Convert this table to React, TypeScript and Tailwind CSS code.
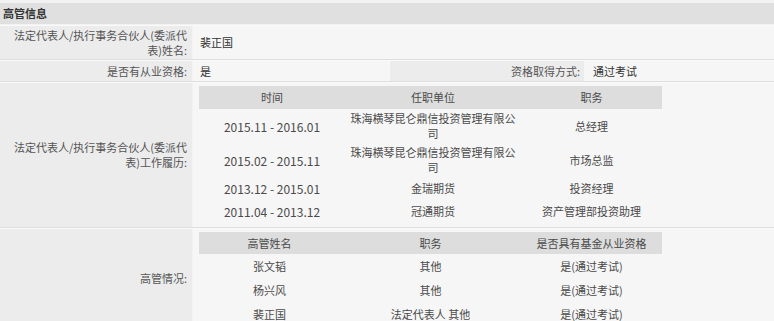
import React from 'react';

const career = [
  { time: '2015.11 - 2016.01', org: '珠海横琴昆仑鼎信投资管理有限公司', title: '总经理' },
  { time: '2015.02 - 2015.11', org: '珠海横琴昆仑鼎信投资管理有限公司', title: '市场总监' },
  { time: '2013.12 - 2015.01', org: '金瑞期货', title: '投资经理' },
  { time: '2011.04 - 2013.12', org: '冠通期货', title: '资产管理部投资助理' },
];

const managers = [
  { name: '张文韬', title: '其他', qual: '是(通过考试)' },
  { name: '杨兴风', title: '其他', qual: '是(通过考试)' },
  { name: '裴正国', title: '法定代表人 其他', qual: '是(通过考试)' },
];

const Label: React.FC<{ children: React.ReactNode; className?: string }> = ({ children, className = '' }) => (
  <div className={`w-[192px] shrink-0 bg-[#ececec] flex items-center justify-end pl-[10px] pr-[5px] text-right text-[#555] ${className}`}>
    <span>{children}</span>
  </div>
);

export default function App() {
  return (
    <div className="w-[774px] h-[321px] overflow-hidden bg-[#f2f2f2] text-[11px] leading-[15px] text-[#4a4a4a] font-['Noto_Sans_CJK_SC','Noto_Sans',sans-serif]">
      <div className="mt-[3px] h-[21px] bg-[#e0e0e0] flex items-center px-[3px] font-bold text-[#333]">高管信息</div>

      <div className="mt-[1px] border-t border-[#fafafa]">
        {/* row 1 */}
        <div className="flex h-[34px] border-b border-[#dedede]">
          <Label>法定代表人/执行事务合伙人(委派代表)姓名:</Label>
          <div className="flex-1 ml-px bg-[#f6f6f6] flex items-center pl-[7px] text-[#333]">裴正国</div>
        </div>

        {/* row 2 */}
        <div className="flex h-[22px] border-t border-[#fafafa] border-b border-b-[#dedede]">
          <Label>是否有从业资格:</Label>
          <div className="w-[197px] ml-px bg-[#f6f6f6] flex items-center pl-[7px] text-[#333]">是</div>
          <div className="w-[194px] bg-[#ececec] flex items-center justify-end pr-[4px] text-[#555]">资格取得方式:</div>
          <div className="flex-1 bg-[#f6f6f6] flex items-center pl-[9px] text-[#333]">通过考试</div>
        </div>

        {/* row 3 */}
        <div className="flex h-[146px] border-t border-[#fafafa] border-b border-b-[#dedede]">
          <Label>法定代表人/执行事务合伙人(委派代表)工作履历:</Label>
          <div className="flex-1 ml-px bg-[#f6f6f6] pl-[6px] pt-[3px]">
            <table className="w-[463px] border-collapse text-center">
              <thead>
                <tr className="h-[23px] bg-[#dddddd]">
                  <th className="w-[146px] font-normal">时间</th>
                  <th className="w-[176px] font-normal">任职单位</th>
                  <th className="w-[141px] font-normal">职务</th>
                </tr>
              </thead>
              <tbody>
                {career.map((c, i) => (
                  <tr key={i} className={i < 2 ? 'h-[34px]' : 'h-[23px]'}>
                    <td className="text-[12px]">{c.time}</td>
                    <td className="px-[4px]">{c.org}</td>
                    <td>{c.title}</td>
                  </tr>
                ))}
              </tbody>
            </table>
          </div>
        </div>

        {/* row 4 */}
        <div className="flex h-[100px] border-t border-[#fafafa]">
          <Label>高管情况:</Label>
          <div className="flex-1 ml-px bg-[#f6f6f6] pl-[6px] pt-[3px]">
            <table className="w-[463px] border-collapse text-center">
              <thead>
                <tr className="h-[22px] bg-[#dddddd]">
                  <th className="w-[141px] font-normal">高管姓名</th>
                  <th className="w-[181px] font-normal">职务</th>
                  <th className="w-[141px] font-normal">是否具有基金从业资格</th>
                </tr>
              </thead>
              <tbody>
                {managers.map((m, i) => (
                  <tr key={i} className="h-[24px]">
                    <td>{m.name}</td>
                    <td>{m.title}</td>
                    <td>{m.qual}</td>
                  </tr>
                ))}
              </tbody>
            </table>
          </div>
        </div>
      </div>
    </div>
  );
}
